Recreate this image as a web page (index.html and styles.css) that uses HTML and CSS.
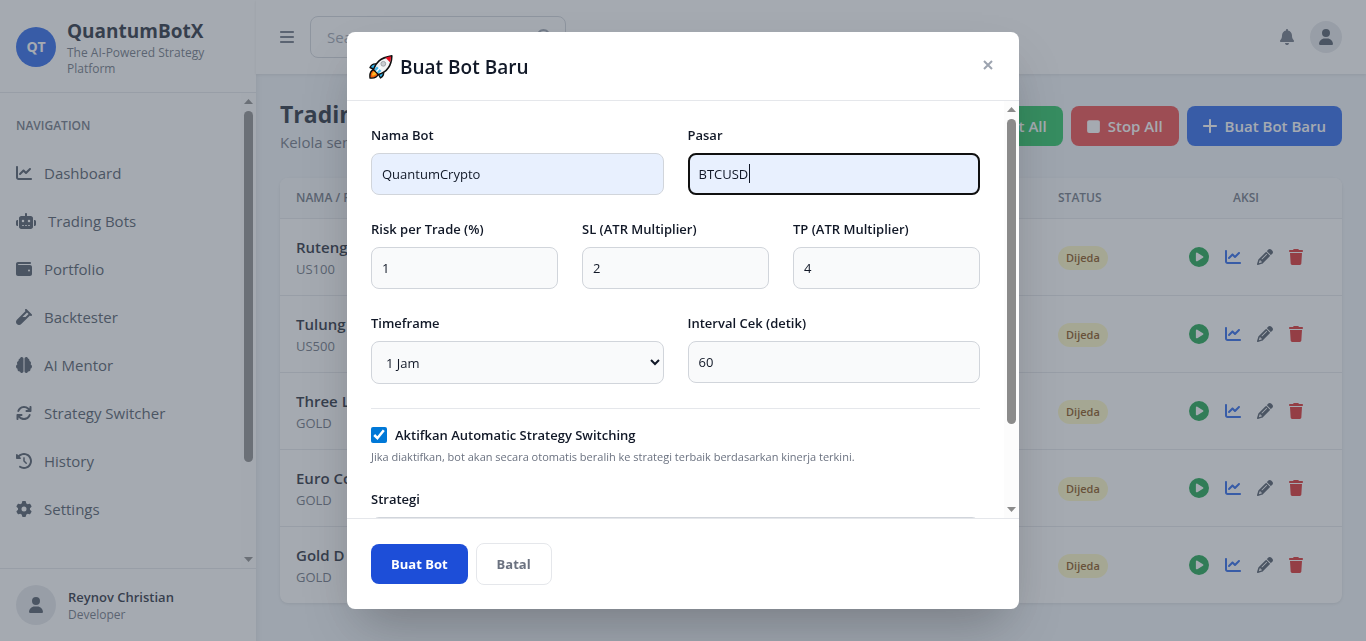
FILE: index.html
```html
<!DOCTYPE html>
<html lang="id">
<head>
<meta charset="utf-8">
<meta name="viewport" content="width=device-width, initial-scale=1">
<title>QuantumBotX</title>
<link rel="stylesheet" href="styles.css">
</head>
<body>
<svg class="sprite" aria-hidden="true">
  <symbol id="chart" viewBox="0 0 512 512"><path d="M64 64c0-17.7-14.3-32-32-32S0 46.3 0 64V400c0 44.2 35.8 80 80 80H480c17.7 0 32-14.3 32-32s-14.3-32-32-32H80c-8.8 0-16-7.2-16-16V64zm406.6 86.6c12.5-12.5 12.5-32.8 0-45.3s-32.8-12.5-45.3 0L320 210.7l-57.4-57.4c-12.5-12.5-32.8-12.5-45.3 0l-112 112c-12.5 12.5-12.5 32.8 0 45.3s32.8 12.5 45.3 0L240 221.3l57.4 57.4c12.5 12.5 32.8 12.5 45.3 0l128-128z"/></symbol>
  <symbol id="robot" viewBox="0 0 640 512"><path d="M320 0c17.7 0 32 14.3 32 32V96H472c39.8 0 72 32.2 72 72V440c0 39.8-32.2 72-72 72H168c-39.8 0-72-32.2-72-72V168c0-39.8 32.2-72 72-72H288V32c0-17.7 14.3-32 32-32zM208 384c-8.8 0-16 7.2-16 16s7.2 16 16 16h32c8.8 0 16-7.2 16-16s-7.2-16-16-16H208zm96 0c-8.8 0-16 7.2-16 16s7.2 16 16 16h32c8.8 0 16-7.2 16-16s-7.2-16-16-16H304zm96 0c-8.8 0-16 7.2-16 16s7.2 16 16 16h32c8.8 0 16-7.2 16-16s-7.2-16-16-16H400zM264 256a40 40 0 1 0 -80 0 40 40 0 1 0 80 0zm152 40a40 40 0 1 0 0-80 40 40 0 1 0 0 80zM48 224H64V416H48c-26.5 0-48-21.5-48-48V272c0-26.5 21.5-48 48-48zm544 0c26.5 0 48 21.5 48 48v96c0 26.5-21.5 48-48 48H576V224h16z"/></symbol>
  <symbol id="wallet" viewBox="0 0 512 512"><path d="M64 32C28.7 32 0 60.7 0 96V416c0 35.3 28.7 64 64 64H448c35.3 0 64-28.7 64-64V192c0-35.3-28.7-64-64-64H80c-8.8 0-16-7.2-16-16s7.2-16 16-16H448c17.7 0 32-14.3 32-32s-14.3-32-32-32H64zM416 272a32 32 0 1 1 0 64 32 32 0 1 1 0-64z"/></symbol>
  <symbol id="vial" viewBox="0 0 512 512"><path d="M342.6 9.4c-12.5-12.5-32.8-12.5-45.3 0s-12.5 32.8 0 45.3l9.4 9.4L28.1 342.6C10.1 360.6 0 385 0 410.5V416c0 53 43 96 96 96h5.5c25.5 0 49.9-10.1 67.9-28.1L448 205.3l9.4 9.4c12.5 12.5 32.8 12.5 45.3 0s12.5-32.8 0-45.3l-32-32-96-96-32-32zM205.3 256L352 109.3 402.7 160l-96 96H205.3z"/></symbol>
  <symbol id="brain" viewBox="0 0 512 512"><path d="M184 0c30.9 0 56 25.1 56 56V456c0 30.9-25.1 56-56 56c-28.9 0-52.7-21.9-55.7-50.1c-5.2 1.4-10.7 2.1-16.3 2.1c-35.3 0-64-28.7-64-64c0-7.4 1.3-14.6 3.6-21.2C21.4 367.4 0 338.2 0 304c0-31.9 18.7-59.5 45.8-72.3C37.1 220.8 32 207 32 192c0-30.7 21.6-56.3 50.4-62.6C80.8 123.9 80 118 80 112c0-29.9 20.6-55.1 48.3-62.1C131.3 21.9 155.1 0 184 0zM328 0c28.9 0 52.6 21.9 55.7 49.9c27.8 7 48.3 32.1 48.3 62.1c0 6-.8 11.9-2.4 17.4c28.8 6.2 50.4 31.9 50.4 62.6c0 15-5.1 28.8-13.8 39.7C493.3 244.5 512 272.1 512 304c0 34.2-21.4 63.4-51.6 74.8c2.3 6.6 3.6 13.8 3.6 21.2c0 35.3-28.7 64-64 64c-5.6 0-11.1-.7-16.3-2.1c-3 28.2-26.8 50.1-55.7 50.1c-30.9 0-56-25.1-56-56V56c0-30.9 25.1-56 56-56z"/></symbol>
  <symbol id="rotate" viewBox="0 0 512 512"><path d="M105.1 202.6c7.7-21.8 20.2-42.3 37.8-59.8c62.5-62.5 163.8-62.5 226.3 0L386.3 160H336c-17.7 0-32 14.3-32 32s14.3 32 32 32H463.9c17.7 0 32-14.3 32-32V64c0-17.7-14.3-32-32-32s-32 14.3-32 32v51.2L414.4 97.6c-87.5-87.5-229.3-87.5-316.8 0C73.2 122 55.6 150.7 44.8 181.4c-5.9 16.7 2.9 34.9 19.5 40.8s34.9-2.9 40.8-19.5zM39 289.3c-5 1.5-9.8 4.2-13.7 8.2c-4 4-6.7 8.8-8.1 14c-.3 1.2-.6 2.5-.8 3.8c-.3 1.7-.4 3.4-.4 5.1V448c0 17.7 14.3 32 32 32s32-14.3 32-32V396.9l17.6 17.5c87.5 87.4 229.3 87.4 316.7 0c24.4-24.4 42.1-53.1 52.9-83.7c5.9-16.7-2.9-34.9-19.5-40.8s-34.9 2.9-40.8 19.5c-7.7 21.8-20.2 42.3-37.8 59.8c-62.5 62.5-163.8 62.5-226.3 0l-.1-.1L125.6 352H176c17.7 0 32-14.3 32-32s-14.3-32-32-32H48.4c-1.6 0-3.2 .1-4.8 .3s-3.1 .5-4.6 1z"/></symbol>
  <symbol id="history" viewBox="0 0 512 512"><path d="M75 75L41 41C25.9 25.9 0 36.6 0 57.9V168c0 13.3 10.7 24 24 24H134.1c21.4 0 32.1-25.9 17-41l-30.8-30.8C155 85.5 203 64 256 64c106 0 192 86 192 192s-86 192-192 192c-40.8 0-78.6-12.7-109.7-34.4c-14.5-10.1-34.4-6.6-44.6 7.9s-6.6 34.4 7.9 44.6C151.2 495 201.7 512 256 512c141.4 0 256-114.6 256-256S397.4 0 256 0C185.3 0 121.3 28.7 75 75zm181 53c-13.3 0-24 10.7-24 24V256c0 6.4 2.5 12.5 7 17l72 72c9.4 9.4 24.6 9.4 33.9 0s9.4-24.6 0-33.9l-65-65V152c0-13.3-10.7-24-24-24z"/></symbol>
  <symbol id="gear" viewBox="0 0 512 512"><path d="M495.9 166.6c3.2 8.7 .5 18.4-6.4 24.6l-43.3 39.4c1.1 8.3 1.7 16.8 1.7 25.4s-.6 17.1-1.7 25.4l43.3 39.4c6.9 6.2 9.6 15.9 6.4 24.6c-4.4 11.9-9.7 23.3-15.8 34.3l-4.7 8.1c-6.6 11-14 21.4-22.1 31.2c-5.9 7.2-15.7 9.6-24.5 6.8l-55.7-17.7c-13.4 10.3-28.2 18.9-44 25.4l-12.5 57.1c-2 9.1-9 16.3-18.2 17.8c-13.8 2.3-28 3.5-42.5 3.5s-28.7-1.2-42.5-3.5c-9.2-1.5-16.2-8.7-18.2-17.8l-12.5-57.1c-15.8-6.5-30.6-15.1-44-25.4L83.1 425.9c-8.8 2.8-18.6 .3-24.5-6.8c-8.1-9.8-15.5-20.2-22.1-31.2l-4.7-8.1c-6.1-11-11.4-22.4-15.8-34.3c-3.2-8.7-.5-18.4 6.4-24.6l43.3-39.4C64.6 273.1 64 264.6 64 256s.6-17.1 1.7-25.4L22.4 191.2c-6.9-6.2-9.6-15.9-6.4-24.6c4.4-11.9 9.7-23.3 15.8-34.3l4.7-8.1c6.6-11 14-21.4 22.1-31.2c5.9-7.2 15.7-9.6 24.5-6.8l55.7 17.7c13.4-10.3 28.2-18.9 44-25.4l12.5-57.1c2-9.1 9-16.3 18.2-17.8C227.3 1.2 241.5 0 256 0s28.7 1.2 42.5 3.5c9.2 1.5 16.2 8.7 18.2 17.8l12.5 57.1c15.8 6.5 30.6 15.1 44 25.4l55.7-17.7c8.8-2.8 18.6-.3 24.5 6.8c8.1 9.8 15.5 20.2 22.1 31.2l4.7 8.1c6.1 11 11.4 22.4 15.8 34.3zM256 336a80 80 0 1 0 0-160 80 80 0 1 0 0 160z"/></symbol>
  <symbol id="user" viewBox="0 0 448 512"><path d="M224 256A128 128 0 1 0 224 0a128 128 0 1 0 0 256zm-45.7 48C79.8 304 0 383.8 0 482.3C0 498.7 13.3 512 29.7 512H418.3c16.4 0 29.7-13.3 29.7-29.7C448 383.8 368.2 304 269.7 304H178.3z"/></symbol>
  <symbol id="bell" viewBox="0 0 448 512"><path d="M224 0c-17.7 0-32 14.3-32 32V51.2C119 66 64 130.6 64 208v18.8c0 47-17.3 92.4-48.5 127.6l-7.4 8.3c-8.4 9.4-10.4 22.9-5.3 34.4S19.4 416 32 416H416c12.6 0 24-7.4 29.2-18.9s3.1-25-5.3-34.4l-7.4-8.3C401.3 319.2 384 273.9 384 226.8V208c0-77.4-55-142-128-156.8V32c0-17.7-14.3-32-32-32zm45.3 493.3c12-12 18.7-28.3 18.7-45.3H224 160c0 17 6.7 33.3 18.7 45.3s28.3 18.7 45.3 18.7s33.3-6.7 45.3-18.7z"/></symbol>
  <symbol id="trash" viewBox="0 0 448 512"><path d="M135.2 17.7L128 32H32C14.3 32 0 46.3 0 64S14.3 96 32 96H416c17.7 0 32-14.3 32-32s-14.3-32-32-32H320l-7.2-14.3C307.4 6.8 296.3 0 284.2 0H163.8c-12.1 0-23.2 6.8-28.6 17.7zM416 128H32L53.2 467c1.6 25.3 22.6 45 47.9 45H346.9c25.3 0 46.3-19.7 47.9-45L416 128z"/></symbol>
  <symbol id="pencil" viewBox="0 0 512 512"><path d="M410.3 231l11.3-11.3-33.9-33.9-62.1-62.1L291.7 89.8l-11.3 11.3-22.6 22.6L58.6 322.9c-10.4 10.4-18 23.3-22.2 37.4L1 480.7c-2.5 8.4-.2 17.5 6.1 23.7s15.3 8.5 23.7 6.1l120.3-35.4c14.1-4.2 27-11.8 37.4-22.2L387.7 253.7 410.3 231zM160 399.4l-9.1 22.7c-4 3.1-8.5 5.4-13.3 6.9L59.4 452l23-78.1c1.4-4.9 3.8-9.4 6.9-13.3l22.7-9.1v32c0 8.8 7.2 16 16 16h32zM362.7 18.7L348.3 33.2 325.7 55.8 314.3 67.1l33.9 33.9 62.1 62.1 33.9 33.9 11.3-11.3 22.6-22.6 14.5-14.5c25-25 25-65.5 0-90.5L453.3 18.7c-25-25-65.5-25-90.5 0zm-47.4 168l-144 144c-6.2 6.2-16.4 6.2-22.6 0s-6.2-16.4 0-22.6l144-144c6.2-6.2 16.4-6.2 22.6 0s6.2 16.4 0 22.6z"/></symbol>
  <symbol id="play" viewBox="0 0 512 512"><path d="M0 256a256 256 0 1 1 512 0A256 256 0 1 1 0 256zM188.3 147.1c-7.6 4.2-12.3 12.3-12.3 20.9V344c0 8.7 4.7 16.7 12.3 20.9s16.8 4.1 24.3-.5l144-88c7.1-4.4 11.5-12.1 11.5-20.5s-4.4-16.1-11.5-20.5l-144-88c-7.4-4.5-16.7-4.7-24.3-.5z"/></symbol>
  <symbol id="bars" viewBox="0 0 448 512"><path d="M0 96c0-17.7 14.3-32 32-32H416c17.7 0 32 14.3 32 32s-14.3 32-32 32H32C14.3 128 0 113.7 0 96zM0 256c0-17.7 14.3-32 32-32H416c17.7 0 32 14.3 32 32s-14.3 32-32 32H32c-17.7 0-32-14.3-32-32zM448 416c0 17.7-14.3 32-32 32H32c-17.7 0-32-14.3-32-32s14.3-32 32-32H416c17.7 0 32 14.3 32 32z"/></symbol>
  <symbol id="plus" viewBox="0 0 448 512"><path d="M256 64c0-17.7-14.3-32-32-32s-32 14.3-32 32V224H32c-17.7 0-32 14.3-32 32s14.3 32 32 32H192V448c0 17.7 14.3 32 32 32s32-14.3 32-32V288H416c17.7 0 32-14.3 32-32s-14.3-32-32-32H256V64z"/></symbol>
  <symbol id="stop" viewBox="0 0 384 512"><rect y="64" width="384" height="384" rx="60"/></symbol>
  <symbol id="search" viewBox="0 0 512 512"><path fill-rule="evenodd" d="M416 208c0 45.9-14.9 88.3-40 122.700L502.600 457.400c12.500 12.500 12.500 32.800 0 45.300s-32.800 12.500-45.300 0L330.700 376c-34.400 25.200-76.800 40-122.700 40C93.100 416 0 322.900 0 208S93.100 0 208 0S416 93.100 416 208zM208 352a144 144 0 1 0 0-288 144 144 0 1 0 0 288z"/></symbol>
</svg>

<div class="app">
  <aside class="sidebar">
    <div class="brand">
      <span class="brand-logo">QT</span>
      <div>
        <div class="brand-name">QuantumBotX</div>
        <div class="brand-tag">The AI-Powered Strategy Platform</div>
      </div>
    </div>
    <div class="scroll-row nav-wrap">
      <nav class="nav">
        <h2 class="nav-title">Navigation</h2>
        <a href="#"><svg class="ico"><use href="#chart"/></svg>Dashboard</a>
        <a href="#"><svg class="ico ico-wide"><use href="#robot"/></svg>Trading Bots</a>
        <a href="#"><svg class="ico"><use href="#wallet"/></svg>Portfolio</a>
        <a href="#"><svg class="ico"><use href="#vial"/></svg>Backtester</a>
        <a href="#"><svg class="ico"><use href="#brain"/></svg>AI Mentor</a>
        <a href="#"><svg class="ico"><use href="#rotate"/></svg>Strategy Switcher</a>
        <a href="#"><svg class="ico"><use href="#history"/></svg>History</a>
        <a href="#"><svg class="ico"><use href="#gear"/></svg>Settings</a>
      </nav>
      <div class="bar" aria-hidden="true"><i class="bar-up"></i><div class="bar-track"><div class="bar-thumb"></div></div><i class="bar-down"></i></div>
    </div>
    <div class="profile">
      <span class="avatar avatar-lg"><svg class="ico"><use href="#user"/></svg></span>
      <div>
        <div class="profile-name">Reynov Christian</div>
        <div class="profile-role">Developer</div>
      </div>
    </div>
  </aside>

  <div class="main">
    <header class="topbar">
      <button class="icon-btn" type="button" aria-label="Menu"><svg class="ico ico-slim"><use href="#bars"/></svg></button>
      <div class="search">
        <input type="text" placeholder="Search markets, bots..." aria-label="Search">
        <svg class="ico"><use href="#search"/></svg>
      </div>
      <div class="topbar-end">
        <button class="icon-btn" type="button" aria-label="Notifikasi"><svg class="ico ico-slim"><use href="#bell"/></svg></button>
        <span class="avatar"><svg class="ico ico-slim"><use href="#user"/></svg></span>
      </div>
    </header>

    <main class="content">
      <div class="page-head">
        <div>
          <h1>Trading Bots</h1>
          <p>Kelola semua</p>
        </div>
        <div class="page-actions">
          <button class="btn btn-green" type="button">Start All</button>
          <button class="btn btn-red" type="button"><svg class="ico ico-stop"><use href="#stop"/></svg>Stop All</button>
          <button class="btn btn-blue" type="button"><svg class="ico ico-slim"><use href="#plus"/></svg>Buat Bot Baru</button>
        </div>
      </div>

      <div class="card">
        <table class="bots">
          <colgroup><col class="col-name"><col class="col-status"><col class="col-action"></colgroup>
          <thead><tr><th>Nama / Pasar</th><th>Status</th><th class="center">Aksi</th></tr></thead>
          <tbody>
            <tr><td><div class="bot-name">Ruteng</div><div class="bot-market">US100</div></td><td><span class="badge">Dijeda</span></td><td class="act-cell"></td></tr>
            <tr><td><div class="bot-name">Tulung</div><div class="bot-market">US500</div></td><td><span class="badge">Dijeda</span></td><td class="act-cell"></td></tr>
            <tr><td><div class="bot-name">Three L</div><div class="bot-market">GOLD</div></td><td><span class="badge">Dijeda</span></td><td class="act-cell"></td></tr>
            <tr><td><div class="bot-name">Euro Co</div><div class="bot-market">GOLD</div></td><td><span class="badge">Dijeda</span></td><td class="act-cell"></td></tr>
            <tr><td><div class="bot-name">Gold D</div><div class="bot-market">GOLD</div></td><td><span class="badge">Dijeda</span></td><td class="act-cell"></td></tr>
          </tbody>
        </table>
      </div>
    </main>
  </div>
</div>

<div class="overlay">
  <form class="modal" role="dialog" aria-labelledby="modal-title">
    <div class="modal-head">
      <h2 id="modal-title">
        <svg class="rocket" viewBox="0 0 24 24" aria-hidden="true">
          <path d="M1.500 23C1 19 2 16 5 14.500L10 19C8.500 22 5 23.500 1.500 23Z" fill="#f7630c" stroke="#111" stroke-width="1.400"/>
          <path d="M3.500 20.500C3.500 18.500 4.500 17 6 16.500L8 18.500C7 20 5.500 20.700 3.500 20.500Z" fill="#fbb829"/>
          <path d="M8 9C5 8.500 3 9.500 1.500 12.500L6 14.500ZM15 16.500C15.500 19.500 14.500 21.500 12 23L9.500 18.500Z" fill="#2fb4ee" stroke="#111" stroke-width="1.400" stroke-linejoin="round"/>
          <path d="M5 14.500C7 8 11 3 23.300 .9C23 12 18 17 10 19.500Z" fill="#f3f4f5" stroke="#111" stroke-width="1.600" stroke-linejoin="round"/>
          <path d="M17 2.700C19 2 21 1.600 22.500 1.600C22.500 3.500 22.200 5.500 21.400 7.300Z" fill="#e81123"/>
          <path d="M6 14L8.500 11.500L13 16L9.700 18.500Z" fill="#49bdf0"/>
          <path d="M8 16.500L12 12.200" stroke="#fff" stroke-width="1.400"/>
          <circle cx="14.800" cy="8.800" r="2.400" fill="#c9ccd0" stroke="#9a9da2" stroke-width=".9"/>
        </svg>
        Buat Bot Baru
      </h2>
      <button class="close" type="button" aria-label="Tutup"><svg viewBox="0 0 10 10" aria-hidden="true"><path d="M1 1L9 9M9 1L1 9"/></svg></button>
    </div>

    <div class="scroll-row">
      <div class="modal-body">
        <div class="grid two">
          <div class="field"><label for="nama">Nama Bot</label><input class="filled" id="nama" type="text" value="QuantumCrypto"></div>
          <div class="field"><label for="pasar">Pasar</label><div class="active-wrap"><input class="filled active" id="pasar" type="text" value="BTCUSD" autofocus><span class="caret" aria-hidden="true"></span></div></div>
        </div>
        <div class="grid three">
          <div class="field"><label for="risk">Risk per Trade (%)</label><input id="risk" type="text" value="1"></div>
          <div class="field"><label for="sl">SL (ATR Multiplier)</label><input id="sl" type="text" value="2"></div>
          <div class="field"><label for="tp">TP (ATR Multiplier)</label><input id="tp" type="text" value="4"></div>
        </div>
        <div class="grid two">
          <div class="field"><label for="tf">Timeframe</label><select id="tf"><option>1 Jam</option></select></div>
          <div class="field"><label for="interval">Interval Cek (detik)</label><input id="interval" type="text" value="60"></div>
        </div>
        <div class="switching">
          <label class="check"><input type="checkbox" checked>Aktifkan Automatic Strategy Switching</label>
          <p>Jika diaktifkan, bot akan secara otomatis beralih ke strategi terbaik berdasarkan kinerja terkini.</p>
        </div>
        <div class="field"><label for="strategi">Strategi</label><select id="strategi"></select></div>
      </div>
      <div class="bar" aria-hidden="true"><i class="bar-up"></i><div class="bar-track"><div class="bar-thumb"></div></div><i class="bar-down"></i></div>
    </div>

    <div class="modal-foot">
      <button class="btn-submit" type="submit">Buat Bot</button>
      <button class="btn-cancel" type="button">Batal</button>
    </div>
  </form>
</div>
<script src="app.js"></script>
</body>
</html>
```

FILE: app.js
```js
// Every bot row carries the same set of actions.
const actions = [
  ["play", "ico-play", "Mulai"],
  ["chart", "act-chart", "Analitik"],
  ["pencil", "act-edit", "Ubah"],
  ["trash", "act-delete ico-slim", "Hapus"],
];
document.querySelectorAll(".act-cell").forEach((cell) => {
  cell.innerHTML = '<div class="acts">' + actions.map(([id, cls, label]) =>
    `<button class="act" type="button" aria-label="${label}"><svg class="ico ${cls}"><use href="#${id}"/></svg></button>`
  ).join("") + "</div>";
});
```

FILE: styles.css
```css
* { box-sizing: border-box; margin: 0; }
body { font-family: "Open Sans", "Noto Sans", sans-serif; font-size: 15px; line-height: 24px; color: #1f2937; background: #f0f4f8; }
button, input, select { font: inherit; color: inherit; }
button { border: 0; background: none; padding: 0; cursor: pointer; }
.sprite { display: none; }
.ico { width: 16px; height: 16px; flex: none; display: block; fill: currentColor; }
.ico-wide { width: 20px; }
.ico-slim { width: 14px; }
.ico-stop { width: 13px; height: 17px; }

.app { display: flex; height: 100vh; overflow: hidden; }

/* Sidebar */
.sidebar { width: 256px; flex: none; display: flex; flex-direction: column; background: #fff; box-shadow: 0 4px 6px rgba(0, 0, 0, .1); }
.brand { display: flex; align-items: center; gap: 11px; padding: 17px 16px 15px; border-bottom: 1px solid #e5e7eb; }
.brand-logo { width: 40px; height: 40px; flex: none; border-radius: 50%; background: #2563eb; color: #fff; font-weight: 700; font-size: 14px; display: flex; align-items: center; justify-content: center; }
.brand-name { font-size: 19px; line-height: 28px; font-weight: 700; }
.brand-tag { font-size: 12px; line-height: 16px; color: #6b7280; }
.scroll-row { display: flex; flex: 1; min-height: 0; }
.nav { flex: 1; padding: 25px 16px 16px; overflow: auto; scrollbar-width: none; }
.nav-title { font-size: 12px; line-height: 16px; font-weight: 600; text-transform: uppercase; color: #6b7280; letter-spacing: 0; margin-bottom: 15px; }
.nav a { display: flex; align-items: center; gap: 12px; height: 48px; color: #4b5563; text-decoration: none; }
.profile { display: flex; align-items: center; gap: 12px; padding: 16px; border-top: 1px solid #e5e7eb; }
.profile-name { font-size: 13px; line-height: 20px; font-weight: 600; }
.profile-role { font-size: 12px; line-height: 16px; color: #6b7280; }
.avatar { width: 32px; height: 32px; border-radius: 50%; background: #e5e7eb; color: #4b5563; display: flex; align-items: center; justify-content: center; }
.avatar-lg { width: 40px; height: 40px; }

/* Scroll rails */
.bar { width: 15px; flex: none; display: flex; flex-direction: column; align-items: center; padding: 6px 0; background: #fcfcfc; }
.bar i { width: 9px; height: 5px; background: #8b8b8b; flex: none; }
.bar-up { clip-path: polygon(50% 0, 100% 100%, 0 100%); }
.bar-down { clip-path: polygon(0 0, 100% 0, 50% 100%); }
.bar-track { flex: 1; width: 9px; padding: 7px 0; }
.bar-thumb { height: 80%; border-radius: 5px; background: #8b8b8b; }

/* Top bar */
.main { flex: 1; min-width: 0; display: flex; flex-direction: column; }
.topbar { display: flex; align-items: center; gap: 16px; padding: 16px 24px; background: #fff; box-shadow: 0 1px 3px rgba(0, 0, 0, .1); }
.icon-btn { color: #6b7280; }
.search { width: 256px; display: flex; align-items: center; padding: 0 12px 0 16px; height: 42px; border: 1px solid #d1d5db; border-radius: 8px; color: #9ca3af; }
.search input { flex: 1; min-width: 0; border: 0; padding: 0; outline: 0; background: none; }
.search input::placeholder { color: #9ca3af; }
.topbar-end { margin-left: auto; display: flex; align-items: center; gap: 16px; }

/* Page */
.content { padding: 24px; }
.page-head { display: flex; align-items: center; justify-content: space-between; margin-bottom: 24px; }
.page-head h1 { font-size: 23px; line-height: 32px; font-weight: 700; }
.page-head p { color: #6b7280; }
.page-actions { display: flex; gap: 8px; }
.btn { display: flex; align-items: center; gap: 8px; height: 40px; padding: 0 16px; border-radius: 8px; color: #fff; font-weight: 600; }
.btn-green { background: #22c55e; }
.btn-red { background: #ef4444; }
.btn-blue { background: #2563eb; }
.card { background: #fff; border-radius: 8px; overflow: hidden; box-shadow: 0 1px 3px rgba(0, 0, 0, .1); }
.bots { width: 100%; border-collapse: collapse; table-layout: fixed; }
.col-status { width: 108px; }
.col-action { width: 192px; }
.bots th { padding: 12px 16px; font-size: 12px; line-height: 16px; font-weight: 600; text-transform: uppercase; text-align: left; color: #6b7280; background: #f6f8fa; border-bottom: 1px solid #e5e7eb; }
.bots th.center { text-align: center; }
.bots td { padding: 16px; border-bottom: 1px solid #e5e7eb; }
.bots tr:last-child td { border-bottom: 0; }
.bot-name { line-height: 24px; font-weight: 600; }
.bot-market { font-size: 13px; line-height: 20px; color: #6b7280; }
.badge { display: inline-block; padding: 4px 8px; border-radius: 12px; font-size: 11px; line-height: 16px; font-weight: 600; background: #fef9c3; color: #854d0e; }
.acts { display: flex; justify-content: center; align-items: center; gap: 16px; }
.ico-play { width: 20px; height: 20px; color: #16a34a; }
.act-chart { color: #2563eb; }
.act-edit { color: #4b5563; }
.act-delete { color: #dc2626; }

/* Dialog */
.overlay { position: fixed; inset: 0; display: flex; align-items: center; justify-content: center; background: rgba(75, 85, 99, .5); }
.modal { width: 100%; max-width: 672px; max-height: 90vh; display: flex; flex-direction: column; background: #fff; border-radius: 8px; box-shadow: 0 25px 50px -12px rgba(0, 0, 0, .25); color: #111827; overflow: hidden; }
.modal-head { display: flex; align-items: flex-start; justify-content: space-between; padding: 21px 24px 19px 21px; border-bottom: 1px solid #e5e7eb; }
.modal-head h2 { display: flex; align-items: center; gap: 7px; font-size: 19px; line-height: 28px; font-weight: 600; }
.rocket { width: 25px; height: 24px; }
.close { width: 14px; height: 24px; display: flex; align-items: center; justify-content: center; }
.close svg { width: 10px; height: 10px; stroke: #9ca3af; stroke-width: 2; fill: none; }
.modal-body { flex: 1; padding: 24px; overflow: auto; scrollbar-width: none; display: flex; flex-direction: column; gap: 24px; font-size: 13px; line-height: 20px; }
.grid { display: grid; gap: 24px; align-items: start; }
.two { grid-template-columns: 1fr 1fr; }
.three { grid-template-columns: 1fr 1fr 1fr; }
.field { display: flex; flex-direction: column; gap: 8px; }
.field label { font-weight: 600; }
.field input, .field select { display: block; width: 100%; min-width: 0; height: 42px; padding: 0 10px; border: 1px solid #d1d5db; border-radius: 8px; background: #f9fafb; outline: 0; }
.field select { height: 43px; }
.field .filled { background: #e8f0fe; }
.field .active { border: 2px solid #101010; padding: 0 9px; caret-color: transparent; }
.active-wrap { position: relative; }
.caret { position: absolute; left: 61px; top: 11px; width: 1px; height: 19px; background: #111827; }
.switching { border-top: 1px solid #e5e7eb; padding-top: 16px; }
.check { display: flex; align-items: center; gap: 8px; font-weight: 600; }
.check input { width: 16px; height: 16px; margin: 0; accent-color: #0078d7; }
.switching p { margin-top: 4px; font-size: 11px; line-height: 16px; color: #6b7280; }
.modal-foot { display: flex; align-items: center; gap: 8px; padding: 24px; border-top: 1px solid #e5e7eb; font-size: 13px; font-weight: 700; line-height: 20px; }
.btn-submit { height: 40px; padding: 0 20px; border-radius: 8px; background: #1d4ed8; color: #fff; }
.btn-cancel { height: 42px; padding: 0 20px; border: 1px solid #e5e7eb; border-radius: 8px; color: #6b7280; background: #fff; }
```
